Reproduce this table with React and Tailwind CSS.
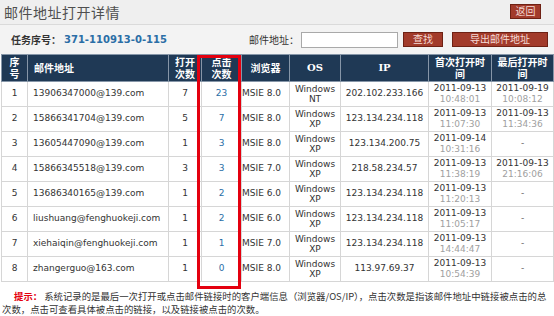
const rows = [
  ["1", "13906347000@139.com", "7", "23", "MSIE 8.0", "NT", "202.102.233.166", ["2011-09-13", "10:48:01"], ["2011-09-19", "10:08:12"]],
  ["2", "15866341704@139.com", "5", "7", "MSIE 8.0", "XP", "123.134.234.118", ["2011-09-13", "11:07:30"], ["2011-09-13", "11:34:36"]],
  ["3", "13605447090@139.com", "1", "3", "MSIE 8.0", "XP", "123.134.200.75", ["2011-09-14", "10:31:16"], null],
  ["4", "15866345518@139.com", "3", "3", "MSIE 7.0", "XP", "218.58.234.57", ["2011-09-13", "11:38:19"], ["2011-09-13", "21:16:06"]],
  ["5", "13686340165@139.com", "1", "2", "MSIE 6.0", "XP", "123.134.234.118", ["2011-09-13", "11:20:13"], null],
  ["6", "liushuang@fenghuokeji.com", "1", "2", "MSIE 6.0", "XP", "123.134.234.118", ["2011-09-13", "11:05:17"], null],
  ["7", "xiehaiqin@fenghuokeji.com", "1", "1", "MSIE 7.0", "XP", "123.134.234.118", ["2011-09-13", "14:44:47"], null],
  ["8", "zhangerguo@163.com", "1", "0", "MSIE 8.0", "XP", "113.97.69.37", ["2011-09-13", "10:54:39"], null],
];

const cjk = "font-['DejaVu_Sans','Noto_Sans_CJK_SC',sans-serif]";

function Btn({ children, w }) {
  return (
    <button className={`${w} h-[15px] bg-[#a23b2b] border border-[#6e2114] text-[#f6dcd6] text-[10px] leading-none flex items-center justify-center`}>
      {children}
    </button>
  );
}

function Stamp({ v }) {
  if (!v) return <span className="text-[#666]">-</span>;
  return (
    <div className="leading-[11px]">
      <div className="text-[#333]">{v[0]}</div>
      <div className="text-[#a0a0a0]">{v[1]}</div>
    </div>
  );
}

export default function App() {
  return (
    <div className={`relative w-[554px] h-[316px] overflow-hidden bg-white ${cjk}`}>
      <div className="h-[25px] bg-[#efefef] border-b border-[#dadada] flex items-center justify-between">
        <h1 className="pl-[4px] text-[14px] text-[#4f4f4f] tracking-[0.5px] font-normal font-['Noto_Sans_CJK_SC',sans-serif]">
          邮件地址打开详情
        </h1>
        <div className="mr-[13px] mt-[-1px]">
          <Btn w="w-[31px]">返回</Btn>
        </div>
      </div>

      <div className="h-[29px] bg-[#f3f3f3] flex items-center text-[10px]">
        <div className="w-[249px] pl-[11px] flex items-center">
          <span className="font-bold text-[#333] font-['Noto_Sans_CJK_SC',sans-serif]">任务序号：</span>
          <span className="ml-[3px] font-bold text-[#2b6ea6] text-[10px]">371-110913-0-115</span>
        </div>
        <span className="text-[#333] font-['Noto_Sans_CJK_SC',sans-serif]">邮件地址：</span>
        <input className="ml-[2px] w-[97px] h-[16px] bg-white border border-[#a9a9a9]" />
        <div className="ml-[5px]">
          <Btn w="w-[40px]">查找</Btn>
        </div>
        <div className="ml-[9px]">
          <Btn w="w-[96px]">导出邮件地址</Btn>
        </div>
      </div>

      <table className="ml-px w-[552px] table-fixed border-collapse text-[9px] text-[#333]">
        <colgroup>
          <col className="w-[26px]" />
          <col className="w-[141px]" />
          <col className="w-[33px]" />
          <col className="w-[40px]" />
          <col className="w-[48px]" />
          <col className="w-[51px]" />
          <col className="w-[88px]" />
          <col className="w-[63px]" />
          <col className="w-[62px]" />
        </colgroup>
        <thead>
          <tr className="h-[27px] bg-[#1f3955] text-white font-bold text-[10px] leading-[12px] font-['Noto_Sans_CJK_SC',sans-serif]">
            <th className="border border-[#8696a8] font-bold px-[4px]">序<br />号</th>
            <th className="border border-[#8696a8] font-bold text-left pl-[6px]">邮件地址</th>
            <th className="border border-[#8696a8] font-bold">打开<br />次数</th>
            <th className="border border-[#8696a8] font-bold">点击<br />次数</th>
            <th className="border border-[#8696a8] font-bold">浏览器</th>
            <th className="border border-[#8696a8] font-bold font-['DejaVu_Serif',serif]">OS</th>
            <th className="border border-[#8696a8] font-bold font-['DejaVu_Serif',serif]">IP</th>
            <th className="border border-[#8696a8] font-bold">首次打开时<br />间</th>
            <th className="border border-[#8696a8] font-bold">最后打开时<br />间</th>
          </tr>
        </thead>
        <tbody>
          {rows.map((r) => (
            <tr key={r[0]} className="h-[25px]">
              <td className="border border-[#d6d6d6] text-center">{r[0]}</td>
              <td className="border border-[#d6d6d6] pl-[5px] whitespace-nowrap">{r[1]}</td>
              <td className="border border-[#d6d6d6] text-center">{r[2]}</td>
              <td className="border border-[#d6d6d6] text-center text-[#2b6ea6]">{r[3]}</td>
              <td className="border border-[#d6d6d6] whitespace-nowrap overflow-hidden">{r[4]}</td>
              <td className="border border-[#d6d6d6] text-center leading-[10px]">
                Windows<br />{r[5]}
              </td>
              <td className="border border-[#d6d6d6] text-center">{r[6]}</td>
              <td className="border border-[#d6d6d6] text-center"><Stamp v={r[7]} /></td>
              <td className="border border-[#d6d6d6] text-center"><Stamp v={r[8]} /></td>
            </tr>
          ))}
        </tbody>
      </table>

      <p className="pt-[8px] px-[2px] indent-[12px] text-[9.4px] leading-[13px] text-[#333] font-['Noto_Sans_CJK_SC',sans-serif]">
        <span className="text-[#e4000f] font-bold">提示：</span>
        &nbsp;系统记录的是最后一次打开或点击邮件链接时的客户端信息（浏览器/OS/IP），点击次数是指该邮件地址中链接被点击的总次数，点击可查看具体被点击的链接，以及链接被点击的次数。
      </p>

      <div className="absolute left-[197px] top-[55px] w-[44px] h-[234px] border-[3px] border-[#e4000f]" />
    </div>
  );
}
